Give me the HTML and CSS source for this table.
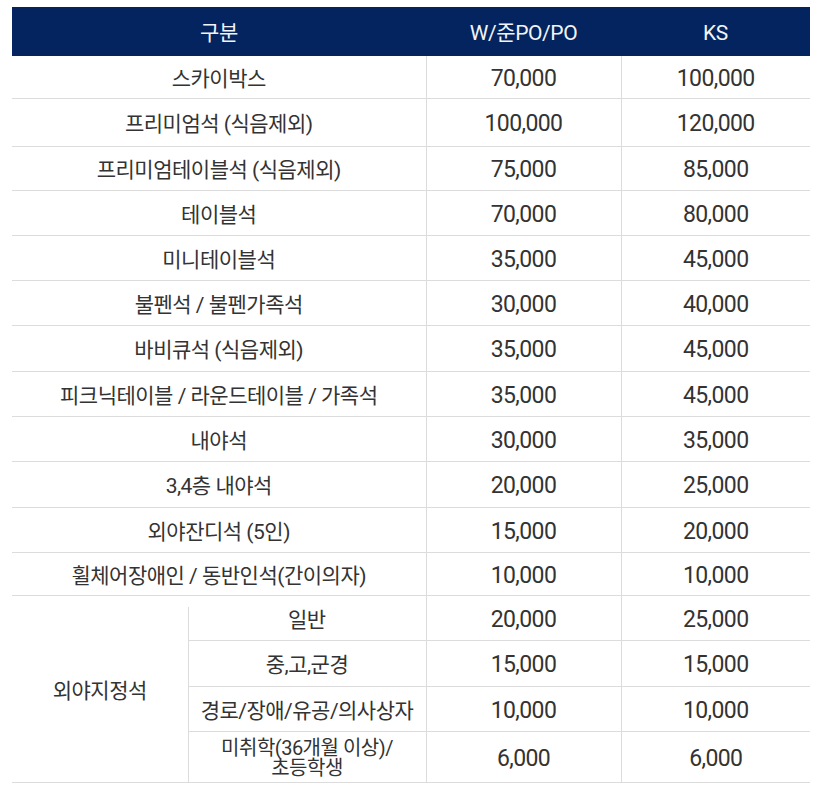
FILE: index.html
```html
<!DOCTYPE html>
<html lang="ko">
<head>
<meta charset="utf-8">
<link rel="stylesheet" href="styles.css">
</head>
<body>
<table class="price">
  <colgroup>
    <col class="c-a"><col class="c-b"><col class="c-c"><col class="c-d">
  </colgroup>
  <thead>
    <tr><th colspan="2">구분</th><th>W/준PO/PO</th><th>KS</th></tr>
  </thead>
  <tbody>
    <tr class="r43"><td colspan="2">스카이박스</td><td class="num">70,000</td><td class="num">100,000</td></tr>
    <tr class="r48"><td colspan="2">프리미엄석 (식음제외)</td><td class="num">100,000</td><td class="num">120,000</td></tr>
    <tr class="r44"><td colspan="2">프리미엄테이블석 (식음제외)</td><td class="num">75,000</td><td class="num">85,000</td></tr>
    <tr><td colspan="2">테이블석</td><td class="num">70,000</td><td class="num">80,000</td></tr>
    <tr><td colspan="2">미니테이블석</td><td class="num">35,000</td><td class="num">45,000</td></tr>
    <tr><td colspan="2">불펜석 / 불펜가족석</td><td class="num">30,000</td><td class="num">40,000</td></tr>
    <tr class="r46"><td colspan="2">바비큐석 (식음제외)</td><td class="num">35,000</td><td class="num">45,000</td></tr>
    <tr><td colspan="2">피크닉테이블 / 라운드테이블 / 가족석</td><td class="num">35,000</td><td class="num">45,000</td></tr>
    <tr><td colspan="2">내야석</td><td class="num">30,000</td><td class="num">35,000</td></tr>
    <tr class="r46"><td colspan="2">3,4층 내야석</td><td class="num">20,000</td><td class="num">25,000</td></tr>
    <tr><td colspan="2">외야잔디석 (5인)</td><td class="num">15,000</td><td class="num">20,000</td></tr>
    <tr class="r43"><td colspan="2">휠체어장애인 / 동반인석(간이의자)</td><td class="num">10,000</td><td class="num">10,000</td></tr>
    <tr><td rowspan="4" class="group">외야지정석</td><td class="sub first">일반</td><td class="num">20,000</td><td class="num">25,000</td></tr>
    <tr class="r46"><td class="sub">중,고,군경</td><td class="num">15,000</td><td class="num">15,000</td></tr>
    <tr><td class="sub">경로/장애/유공/의사상자</td><td class="num">10,000</td><td class="num">10,000</td></tr>
    <tr class="r51"><td class="sub two">미취학(36개월 이상)/<br>초등학생</td><td class="num">6,000</td><td class="num">6,000</td></tr>
  </tbody>
</table>
</body>
</html>
```

FILE: styles.css
```css
html, body {
  margin: 0;
  padding: 0;
  background: #ffffff;
}

body {
  padding: 7px 13px 0 12px;
  font-family: Roboto, "Noto Sans CJK KR", sans-serif;
  color: #333333;
}

.price {
  width: 798px;
  border-collapse: collapse;
  table-layout: fixed;
}

.c-a { width: 176px; }
.c-b { width: 238px; }
.c-c { width: 195px; }
.c-d { width: 189px; }

.price th {
  height: 47px;
  padding: 2px 0 0;
  background: #03245f;
  color: #f2f4f8;
  font-weight: 400;
  font-size: 21px;
  letter-spacing: -0.4px;
  line-height: 18px;
  text-align: center;
  vertical-align: middle;
  border: 0;
}

.price td {
  height: 41px;
  padding: 3px 0 0;
  text-align: center;
  vertical-align: middle;
  font-size: 21px;
  letter-spacing: -0.5px;
  line-height: 18px;
  border-bottom: 1px solid #dcdcdc;
  border-left: 1px solid #dcdcdc;
}

.price td:first-child {
  border-left: 0;
}

.price td.num {
  font-size: 23px;
  letter-spacing: -0.6px;
}

.price tr.r43 td { height: 39px; }
.price tr.r44 td { height: 40px; }
.price tr.r46 td { height: 42px; }
.price tr.r48 td { height: 44px; }
.price tr.r51 td { height: 47px; }

.price td.group {
  border-right: 0;
}

.price td.sub {
  border-left: 1px solid #dcdcdc;
}

.price td.sub.first {
  border-left: 0;
  background: linear-gradient(#dcdcdc, #dcdcdc) left 11px / 1px 100% no-repeat;
}

.price td.two {
  padding-top: 1px;
  font-size: 20px;
  line-height: 20px;
}
```
